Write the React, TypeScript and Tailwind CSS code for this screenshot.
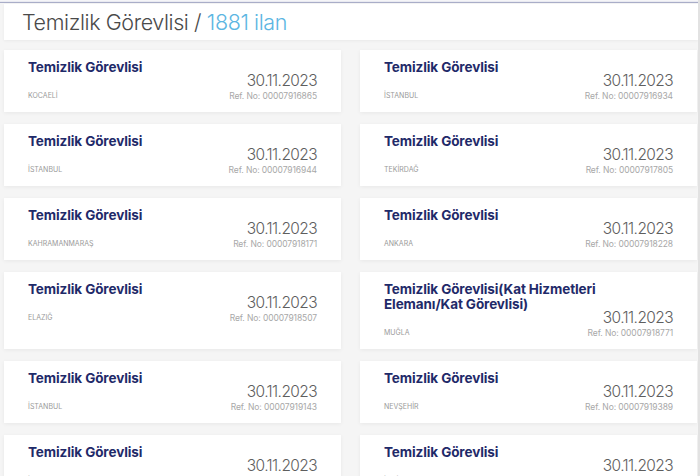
import React from "react";

type Job = { title: string; city: string; ref: string };

const rows: [Job, Job][] = [
  [
    { title: "Temizlik Görevlisi", city: "KOCAELİ", ref: "00007916865" },
    { title: "Temizlik Görevlisi", city: "İSTANBUL", ref: "00007916934" },
  ],
  [
    { title: "Temizlik Görevlisi", city: "İSTANBUL", ref: "00007916944" },
    { title: "Temizlik Görevlisi", city: "TEKİRDAĞ", ref: "00007917805" },
  ],
  [
    { title: "Temizlik Görevlisi", city: "KAHRAMANMARAŞ", ref: "00007918171" },
    { title: "Temizlik Görevlisi", city: "ANKARA", ref: "00007918228" },
  ],
  [
    { title: "Temizlik Görevlisi", city: "ELAZIĞ", ref: "00007918507" },
    {
      title: "Temizlik Görevlisi(Kat Hizmetleri Elemanı/Kat Görevlisi)",
      city: "MUĞLA",
      ref: "00007918771",
    },
  ],
  [
    { title: "Temizlik Görevlisi", city: "İSTANBUL", ref: "00007919143" },
    { title: "Temizlik Görevlisi", city: "NEVŞEHİR", ref: "00007919389" },
  ],
  [
    { title: "Temizlik Görevlisi", city: "İSTANBUL", ref: "00007919512" },
    { title: "Temizlik Görevlisi", city: "İZMİR", ref: "00007919640" },
  ],
];

function Card({ job }: { job: Job }) {
  return (
    <div className="bg-white shadow-[0_1px_4px_rgba(0,0,0,0.06)] pl-[24px] pr-[24px] pt-[10px] pb-[11px]">
      <div className="text-[13.5px] leading-[15px] font-bold text-[#1f2a69] tracking-[-0.1px] max-w-[225px]">
        {job.title}
      </div>
      <div className="flex items-end justify-between mt-[-2px]">
        <div className="text-[7px] leading-[8px] text-[#9a9a9a] uppercase mb-[1px]">{job.city}</div>
        <div className="flex flex-col items-end">
          <div className="text-[15.5px] leading-[16px] font-light text-[#5e5e5e] tracking-[-0.6px]">
            30.11.2023
          </div>
          <div className="text-[8.5px] leading-[10px] text-[#a8a8a8] mt-[2px] tracking-[-0.1px]">
            Ref. No: {job.ref}
          </div>
        </div>
      </div>
    </div>
  );
}

export default function App() {
  return (
    <div
      className="w-[700px] h-[476px] overflow-hidden bg-[#f5f5f5] relative"
      style={{ fontFamily: "Inter, 'Noto Sans', sans-serif" }}
    >
      <div className="h-[3px] bg-[#e9eaf1] border-t border-b border-t-[#f5f5f8] border-b-[#a9adc8]" />
      <div className="pl-[4px] pr-[2px] pt-[1px]">
        <div className="bg-white h-[36px] pl-[18px] flex items-center shadow-[0_1px_3px_rgba(0,0,0,0.05)]">
          <span className="text-[21.5px] leading-[24px] font-light text-[#4a4a4a] tracking-[-0.4px]">
            Temizlik Görevlisi /{" "}
            <span className="text-[#5cb6e2]">1881 ilan</span>
          </span>
        </div>
      </div>
      <div className="grid grid-cols-[337px_337px] gap-x-[19px] gap-y-[12px] pl-[4px] mt-[10px]">
        {rows.map(([a, b], i) => (
          <React.Fragment key={i}>
            <Card job={a} />
            <Card job={b} />
          </React.Fragment>
        ))}
      </div>
      <div className="absolute right-0 top-0 w-[2px] h-full bg-[#e2e2e2]" />
    </div>
  );
}
